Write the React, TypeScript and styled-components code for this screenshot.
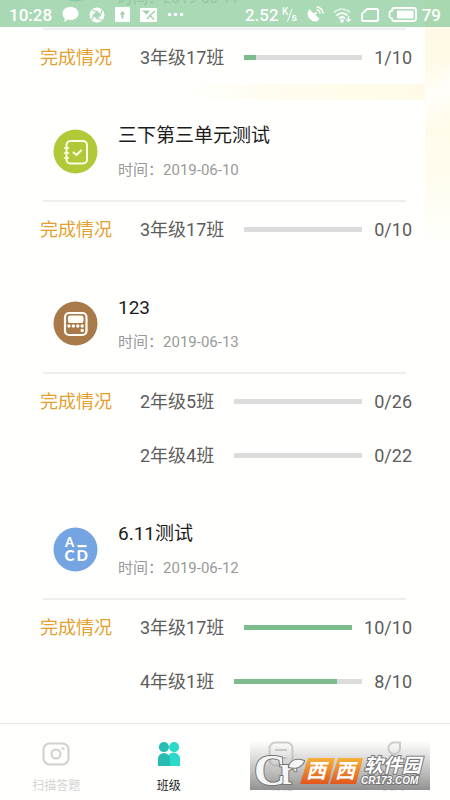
import React from "react";
import styled, { createGlobalStyle } from "styled-components";

const GlobalStyle = createGlobalStyle`
  * { box-sizing: border-box; }
  body {
    margin: 0;
    font-family: Roboto, "Noto Sans CJK SC", sans-serif;
    color: #5c5c5c;
  }
  button { font: inherit; border: 0; padding: 0; background: none; cursor: pointer; }
  h2, p { margin: 0; font-weight: 400; }
`;

const Page = styled.div`
  position: relative;
  display: flex;
  flex-direction: column;
  height: 100vh;
  overflow: hidden;
  background:
    linear-gradient(150deg, transparent 40%, rgba(255, 255, 255, 0.8) 58%, transparent 76%) top right / 25px 160px no-repeat,
    radial-gradient(ellipse 100% 100% at top right, #fff8e4 0%, #fffbe9 45%, #fffcef 75%, transparent 100%) top right / 60% 240px no-repeat,
    #fffffb;
`;

const StatusBar = styled.header`
  position: absolute;
  inset: 0 0 auto;
  z-index: 2;
  display: flex;
  align-items: center;
  justify-content: space-between;
  height: 27px;
  padding: 2px 9px 0;
  background: rgba(148, 207, 162, 0.8);
  color: #fff;
  font-size: 17px;
  font-weight: 500;
  line-height: 24px;
`;

const StatusGroup = styled.div<{ $gap: number }>`
  display: flex;
  align-items: center;
  gap: ${(p) => p.$gap}px;
`;

const Speed = styled.span`
  display: flex;
  align-items: center;
  gap: 3px;
`;

const Battery = styled.span`
  display: flex;
  align-items: center;
  gap: 5px;
`;

const List = styled.main`
  flex: 1;
  min-height: 0;
  display: flex;
  flex-direction: column;
  justify-content: flex-end;
  gap: 16px;
  padding: 0 25px 15px;
  overflow: hidden;
`;

const Card = styled.article`
  flex: none;
  border-radius: 4px;
  background: #fffffe;
`;

const CardHead = styled.div`
  display: flex;
  align-items: center;
  gap: 20px;
  height: 102px;
  margin: 0 19px 0 18px;
  padding: 2px 0 0 10px;
  border-bottom: 2px solid #eeeeee;
`;

const Badge = styled.svg`
  flex: none;
  width: 45px;
  height: 45px;
`;

const HeadText = styled.div`
  display: flex;
  flex-direction: column;
  gap: 10px;
  padding-top: 2px;
`;

const Title = styled.h2`
  color: #1c1c1c;
  font-size: 19px;
  line-height: 26px;
`;

const Time = styled.p`
  color: #999;
  font-size: 15px;
  line-height: 22px;
`;

const Body = styled.div`
  display: flex;
  padding: 0 13px 0 15px;
  font-size: 18px;
  line-height: 26px;
`;

const Caption = styled.div`
  width: 100px;
  padding-top: 15px;
  color: #e3a02f;
`;

const Rows = styled.div`
  flex: 1;
`;

const Row = styled.div`
  display: flex;
  align-items: center;
  height: 54px;
`;

const Label = styled.span`
  padding-top: 2px;
`;

const Track = styled.div`
  flex: 1;
  height: 5px;
  margin: 0 12px 0 20px;
  background: #dcdcdc;
`;

const Fill = styled.div`
  height: 100%;
  background: #7dbd8d;
`;

const Nav = styled.nav`
  flex: none;
  display: grid;
  grid-template-columns: repeat(4, 1fr);
  height: 77px;
  border-top: 1px solid #e4e4e2;
  background: #fffffd;
`;

const Tab = styled.button<{ $active?: boolean }>`
  display: flex;
  flex-direction: column;
  align-items: center;
  justify-content: flex-end;
  gap: 10px;
  padding-bottom: 5px;
  color: ${(p) => (p.$active ? "#222" : "#d3d3d3")};
  font-size: 12px;
  line-height: 18px;
`;

const Watermark = styled.svg`
  position: absolute;
  right: 20px;
  bottom: 10px;
  z-index: 3;
  width: 180px;
  height: 50px;
`;

type Kind = "book" | "calc" | "choice" | "plain";

const badgeColor: Record<Kind, string> = {
  book: "#b1c838",
  calc: "#a87a4a",
  choice: "#75a4e2",
  plain: "#5fb8b4",
};

function KindBadge({ kind }: { kind: Kind }) {
  return (
    <Badge viewBox="0 0 45 45" aria-hidden="true">
      <circle cx="22.5" cy="22.5" r="22" fill={badgeColor[kind]} />
      {kind === "book" && (
        <g fill="none" stroke="#fffde8" strokeWidth="2" strokeLinecap="round" strokeLinejoin="round">
          <rect x="13.5" y="12" width="20.5" height="22.5" rx="4" />
          <path d="M11.5 19h4M11.5 24h4M11.5 29h4" strokeWidth="1.6" />
          <path d="M20.5 23.5l3 2.5 4.5-4.5" />
        </g>
      )}
      {kind === "calc" && (
        <g>
          <rect x="12" y="12" width="21.5" height="22" rx="4" fill="none" stroke="#fffdf5" strokeWidth="2.2" />
          <rect x="15" y="14.5" width="15.5" height="7.5" rx="2" fill="#fffdf5" />
          <g fill="#fffdf5">
            <circle cx="16" cy="25" r="1.7" />
            <circle cx="20.4" cy="25" r="1.7" />
            <circle cx="24.8" cy="25" r="1.7" />
            <circle cx="29.2" cy="25" r="1.7" />
            <circle cx="29.2" cy="29.5" r="1.7" />
          </g>
        </g>
      )}
      {kind === "choice" && (
        <g fill="#fff" fontFamily="Lato, sans-serif" fontWeight="900">
          <text x="12" y="20" fontSize="13">A</text>
          <text x="11.5" y="34" fontSize="15">C</text>
          <text x="23.5" y="34" fontSize="15">D</text>
          <rect x="24.5" y="18" width="9" height="2.2" />
        </g>
      )}
    </Badge>
  );
}

interface Progress {
  name: string;
  done: number;
  total: number;
}

interface Test {
  title: string;
  date: string;
  kind: Kind;
  classes: Progress[];
}

const tests: Test[] = [
  { title: "测试", date: "2019-06-11", kind: "plain", classes: [{ name: "3年级17班", done: 1, total: 10 }] },
  { title: "三下第三单元测试", date: "2019-06-10", kind: "book", classes: [{ name: "3年级17班", done: 0, total: 10 }] },
  {
    title: "123",
    date: "2019-06-13",
    kind: "calc",
    classes: [
      { name: "2年级5班", done: 0, total: 26 },
      { name: "2年级4班", done: 0, total: 22 },
    ],
  },
  {
    title: "6.11测试",
    date: "2019-06-12",
    kind: "choice",
    classes: [
      { name: "3年级17班", done: 10, total: 10 },
      { name: "4年级1班", done: 8, total: 10 },
    ],
  },
];

function TestCard({ test }: { test: Test }) {
  return (
    <Card>
      <CardHead>
        <KindBadge kind={test.kind} />
        <HeadText>
          <Title>{test.title}</Title>
          <Time>时间：{test.date}</Time>
        </HeadText>
      </CardHead>
      <Body>
        <Caption>完成情况</Caption>
        <Rows>
          {test.classes.map((c) => (
            <Row key={c.name}>
              <Label>{c.name}</Label>
              <Track role="progressbar" aria-label={c.name} aria-valuenow={c.done} aria-valuemax={c.total}>
                <Fill style={{ width: `${(c.done / c.total) * 100}%` }} />
              </Track>
              <Label>{c.done}/{c.total}</Label>
            </Row>
          ))}
        </Rows>
      </Body>
    </Card>
  );
}

function Status() {
  return (
    <StatusBar>
      <StatusGroup $gap={10}>
        <span>10:28</span>
        <svg width="17" height="17" viewBox="0 0 17 17" fill="#fff" aria-hidden="true">
          <path d="M8.500 1C13 1 16.500 3.700 16.500 7.500S13 14 8.500 14c-1 0-1.900-.1-2.700-.4L2.200 16l.6-3.800C1.200 11 .5 9.500.500 7.500.500 3.700 4 1 8.500 1z" />
        </svg>
        <svg width="16" height="16" viewBox="0 0 16 16" aria-hidden="true">
          <circle cx="8" cy="8" r="7.500" fill="#fff" />
          <g stroke="#a9d9b6" strokeWidth="1.300" fill="none">
            <path d="M8 4.500L11.500 8 8 11.500 4.500 8z" fill="#a9d9b6" />
            <path d="M8 4.500L3 3M11.500 8L13 3M8 11.500l5 1.500M4.500 8L3 13" />
          </g>
        </svg>
        <svg width="15" height="15" viewBox="0 0 15 15" aria-hidden="true">
          <rect width="15" height="15" rx="1" fill="#fff" />
          <path d="M7.500 11.500V6" stroke="#9dceaa" strokeWidth="1.800" />
          <path d="M4.800 7.500L7.500 4l2.700 3.500z" fill="#9dceaa" />
        </svg>
        <svg width="17" height="14" viewBox="0 0 17 14" aria-hidden="true">
          <rect width="17" height="14" rx="1" fill="#fff" />
          <path d="M2 2.500h8L6.500 6.500z" fill="#9dceaa" />
          <path d="M15 3l-5 4.500 4 4M10 7.500L7 11" fill="none" stroke="#9dceaa" strokeWidth="1.300" />
        </svg>
        <svg width="17" height="5" viewBox="0 0 17 5" fill="#fff" aria-hidden="true">
          <circle cx="2.500" cy="2.500" r="1.800" />
          <circle cx="8.500" cy="2.500" r="1.800" />
          <circle cx="14.500" cy="2.500" r="1.800" />
        </svg>
      </StatusGroup>
      <StatusGroup $gap={9}>
        <Speed>
          <span>2.52</span>
          <svg width="16" height="18" viewBox="0 0 16 18" fill="#fff" fontSize="10" aria-label="K/s">
            <text x="0" y="9">K</text>
            <path d="M10 3L5.500 15.500" stroke="#fff" />
            <text x="9.500" y="15" fontSize="11">s</text>
          </svg>
        </Speed>
        <svg width="17" height="17" viewBox="0 0 17 17" fill="none" stroke="#fff" aria-hidden="true">
          <path d="M2.500 4.500a6.300 6.300 0 0 0 9 8.500zM5 14.500h5l-1.500-2" fill="#fff" strokeWidth="1.500" />
          <path d="M7 9l2.500-2.500" strokeWidth="2" />
          <path d="M9.500 4c2 0 3.500 1.500 3.500 3.500M9.500 1c4 0 6.500 3 6.500 6.500" strokeWidth="1.500" />
        </svg>
        <svg width="19" height="16" viewBox="0 0 19 16" fill="none" stroke="#fff" strokeWidth="1.800" aria-hidden="true">
          <path d="M1 5.500c4.500-4.500 11.500-4.500 16 0" opacity=".6" />
          <path d="M3.500 8.500c3.200-3.200 8-3.200 11 0M6 11.500c2-2 4.500-2 6 0" />
          <circle cx="9" cy="13.800" r="1" fill="#fff" />
          <path d="M15.500 9v5M13.500 12.200l2 2 2-2" strokeWidth="1.400" />
        </svg>
        <svg width="18" height="14" viewBox="0 0 18 14" fill="none" stroke="#fff" strokeWidth="2" aria-hidden="true">
          <path d="M6 1h9.500q1.500 0 1.500 1.500v9q0 1.500-1.500 1.500h-13Q1 13 1 11.500V6z" />
        </svg>
        <Battery>
          <svg width="29" height="15" viewBox="0 0 29 15" aria-hidden="true">
            <path d="M6 1h19.500q2.500 0 2.500 2.500v8q0 2.500-2.500 2.500H6Q4 14 4 11.500L1.500 10V5L4 3.500Q4 1 6 1z" fill="none" stroke="#fff" strokeWidth="1.800" />
            <rect x="9" y="3.500" width="16.500" height="8" fill="#fff" />
          </svg>
          <span>79</span>
        </Battery>
      </StatusGroup>
    </StatusBar>
  );
}

function BrandMark() {
  return (
    <Watermark viewBox="0 0 180 50" aria-label="西西软件园 CR173.COM">
      <defs>
        <linearGradient id="shade" x1="0" y1="0" x2="0" y2="1">
          <stop offset="0" stopColor="#bbb" stopOpacity="0" />
          <stop offset="0.5" stopColor="#aaa" stopOpacity="0.6" />
          <stop offset="1" stopColor="#8a8a8a" stopOpacity="0.95" />
        </linearGradient>
        <linearGradient id="tile" x1="0" y1="0" x2="0" y2="1">
          <stop offset="0" stopColor="#f6b13a" />
          <stop offset="1" stopColor="#e2561f" />
        </linearGradient>
      </defs>
      <rect width="180" height="50" fill="url(#shade)" />
      <g fontFamily="Liberation Serif, serif" fill="#f6f6f6" stroke="#777" strokeWidth="2" paintOrder="stroke">
        <text x="29" y="44" fontSize="40" fontWeight="700">r</text>
        <text x="4" y="45" fontSize="44" fontWeight="700">C</text>
        <path d="M39 27c1-6 7-9 15-6-2 6-9 8-15 6z" />
      </g>
      <path d="M58 18h27l-7 26H50zM88 18h25l-7 26H80z" fill="url(#tile)" />
      <g fontFamily="Noto Sans CJK SC, sans-serif" fontWeight="700" fill="#fff" fontStyle="italic">
        <text x="56" y="38" fontSize="20">西</text>
        <text x="85" y="38" fontSize="20">西</text>
        <g stroke="#777" strokeWidth="2" paintOrder="stroke">
          <text x="114" y="32" fontSize="19">软件园</text>
          <text x="111" y="44" fontSize="10" fontFamily="Liberation Sans, sans-serif">CR173.COM</text>
        </g>
      </g>
    </Watermark>
  );
}

export default function App() {
  return (
    <Page>
      <GlobalStyle />
      <Status />
      <List>
        {tests.map((t) => (
          <TestCard key={t.date} test={t} />
        ))}
      </List>
      <Nav>
        <Tab>
          <svg width="28" height="26" viewBox="0 0 28 26" fill="none" stroke="#cfcfcf" strokeWidth="2" aria-hidden="true">
            <rect x="1.500" y="2.500" width="25" height="21" rx="6" />
            <circle cx="14" cy="13" r="4.500" />
            <circle cx="21" cy="7.500" r=".5" />
          </svg>
          扫描答题
        </Tab>
        <Tab $active aria-current="page">
          <svg width="24" height="26" viewBox="0 0 26 28" aria-hidden="true">
            <circle cx="18.500" cy="6.500" r="5.500" fill="#2cd9ca" />
            <path d="M11 27V19.500a7 7 0 0 1 14 0V27z" fill="#2cd9ca" />
            <circle cx="7.500" cy="6.500" r="5.500" fill="#27bdb3" />
            <path d="M1 27V19.500a6.500 6.500 0 0 1 13 0V27z" fill="#27bdb3" />
          </svg>
          班级
        </Tab>
        <Tab>
          <svg width="26" height="26" viewBox="0 0 26 26" fill="none" stroke="#cfcfcf" strokeWidth="2" aria-hidden="true">
            <rect x="1.500" y="1.500" width="23" height="23" rx="6" />
            <path d="M7 9h12M7 17h12" />
          </svg>
          功能
        </Tab>
        <Tab>
          <svg width="26" height="26" viewBox="0 0 26 26" fill="none" stroke="#cfcfcf" strokeWidth="2" aria-hidden="true">
            <path d="M13 1.500h6v5.500a5.800 5.800 0 1 1-6-5.500z" />
            <path d="M3 25c0-11 20-11 20 0" opacity=".4" />
          </svg>
          我的
        </Tab>
      </Nav>
      <BrandMark />
    </Page>
  );
}
